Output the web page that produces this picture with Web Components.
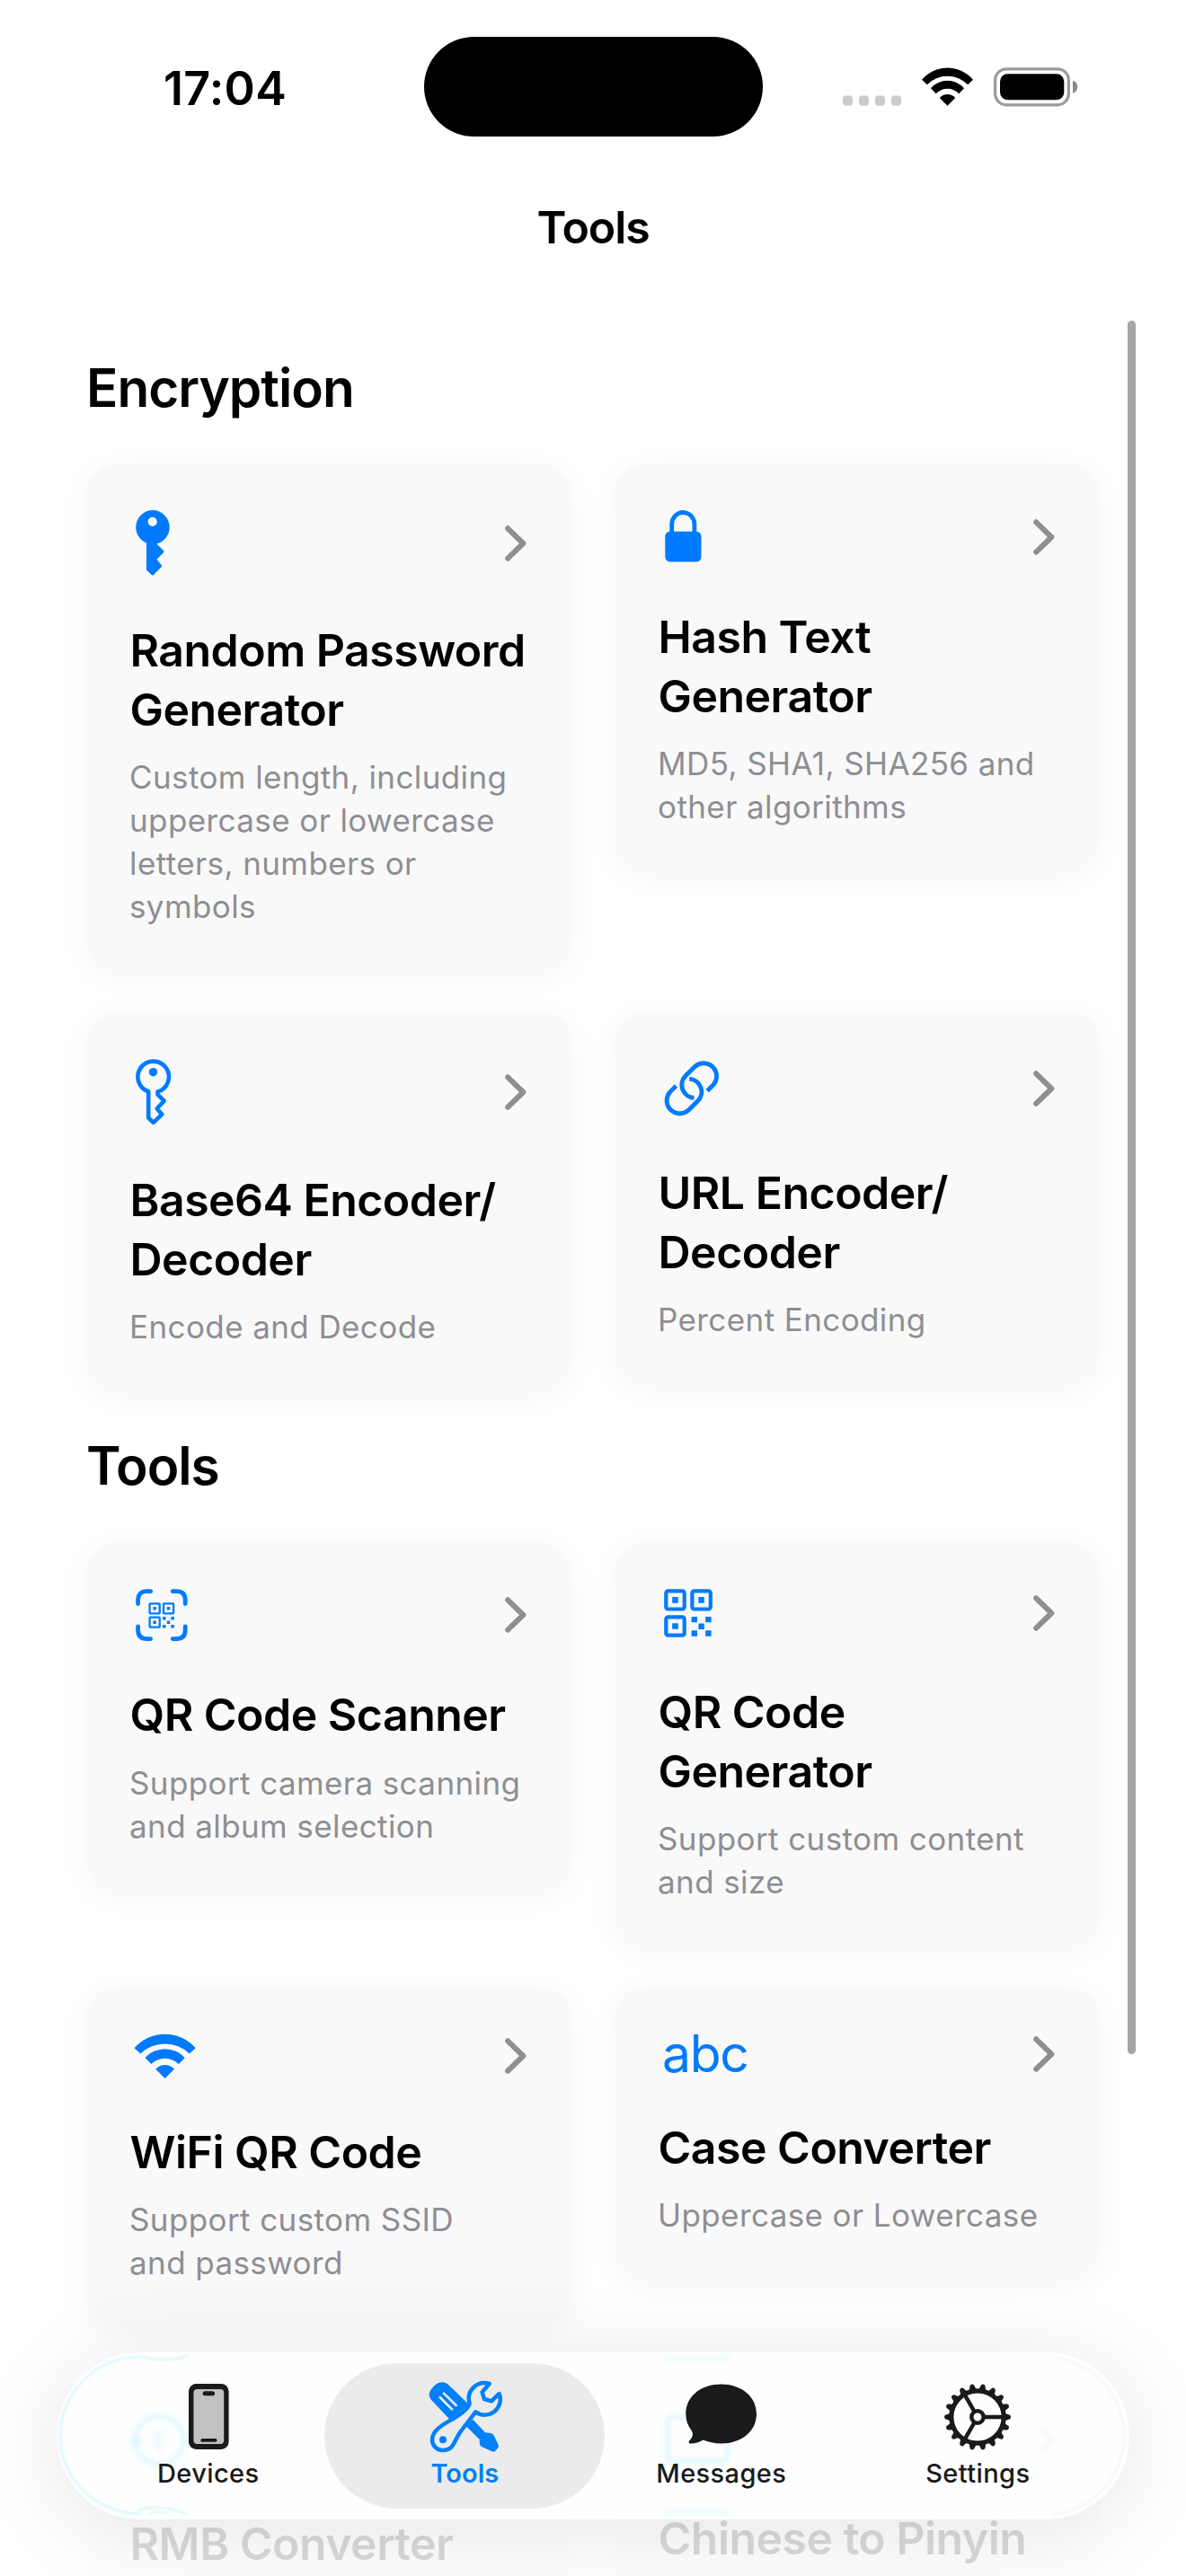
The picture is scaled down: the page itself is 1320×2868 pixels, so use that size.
<!DOCTYPE html>
<html lang="en">
<head>
<meta charset="utf-8">
<title>Tools</title>
<style>
  html, body { margin: 0; padding: 0; background: #fff; }
  body { font-family: Inter, "Liberation Sans", sans-serif; color: #000; }
</style>
</head>
<body>
<tools-app>
  <tool-section heading="Encryption">
    <tool-card icon="key-fill" style="--head:82px"><span slot="title">Random Password<br>Generator</span>Custom length, including<br>uppercase or lowercase<br>letters, numbers or<br>symbols</tool-card>
    <tool-card icon="lock" style="--head:67px"><span slot="title">Hash Text<br>Generator</span>MD5, SHA1, SHA256 and<br>other algorithms</tool-card>
    <tool-card icon="key" style="--head:84px"><span slot="title">Base64 Encoder/<br>Decoder</span>Encode and Decode</tool-card>
    <tool-card icon="link" style="--head:76px"><span slot="title">URL Encoder/<br>Decoder</span>Percent Encoding</tool-card>
  </tool-section>
  <tool-section heading="Tools">
    <tool-card icon="scanner" style="--head:67px"><span slot="title">QR Code Scanner</span>Support camera scanning<br>and album selection</tool-card>
    <tool-card icon="qr" style="--head:63.5px"><span slot="title">QR Code<br>Generator</span>Support custom content<br>and size</tool-card>
    <tool-card icon="wifi" style="--head:58px"><span slot="title">WiFi QR Code</span>Support custom SSID<br>and password</tool-card>
    <tool-card icon="abc" style="--head:53px"><span slot="title">Case Converter</span>Uppercase or Lowercase</tool-card>
    <tool-card icon="none" style="--head:70px"><span slot="title">RMB Converter</span></tool-card>
    <tool-card icon="none" style="--head:64px"><span slot="title">Chinese to Pinyin</span></tool-card>
  </tool-section>
</tools-app>

<script>
const WIFI = `<path d="M315 115A111.4 111.4 0 0 1 486 115L468.500 131A96 96 0 0 0 332.500 131Z"/>
  <path d="M345 143A74 74 0 0 1 456 143L439 161A54 54 0 0 0 362 161Z"/>
  <path d="M374.500 175.500A34 34 0 0 1 426.500 175.500L400.500 202Z"/>`;

const ICONS = {
  'none': '',
  'key-fill': `<svg width="60" height="82" viewBox="0 0 60 82"><path fill="currentColor" fill-rule="evenodd" d="M26 4.100A18.900 18.900 0 0 0 19 40.500V70.500L25 76.200Q26 77 27 76L35.800 67Q36.500 66 35.800 65.200L30.500 58.800L38 51.200Q39 50 38 49L30.500 41.600V41.300A18.900 18.900 0 0 0 26 4.100ZM25.700 11.700a5.100 5.100 0 1 1 0 10.200a5.100 5.100 0 1 1 0-10.200Z"/></svg>`,
  'lock': `<svg width="60" height="67" viewBox="0 0 60 67"><rect x="8.300" y="27.700" width="40.200" height="33.900" rx="5.500" fill="currentColor"/><path d="M15.700 30V20A12.600 13.500 0 0 1 40.900 20V30" fill="none" stroke="currentColor" stroke-width="4.800"/></svg>`,
  'key': `<svg width="60" height="84" viewBox="0 0 60 84"><path d="M21.200 41.300V70.500L26.700 75.800L36.300 66.700L30.700 60.200L38.700 51.600L31.500 44.600V41.500A17.300 17.300 0 1 0 21.200 41.300Z" fill="none" stroke="currentColor" stroke-width="4.600" stroke-linejoin="round"/><circle cx="26.500" cy="19.600" r="4.700" fill="currentColor"/></svg>`,
  'link': `<svg width="76" height="76" viewBox="0 0 76 76" fill="none" stroke="currentColor" stroke-width="4.900"><path d="M55.200 40.600L62.100 33.700A14.500 14.500 0 0 0 41.600 13.300L31 23.800A14.500 14.500 0 0 0 40.500 48.400"/><path transform="rotate(180 37.850 37.750)" d="M55.200 40.600L62.100 33.700A14.500 14.500 0 0 0 41.600 13.300L31 23.800A14.500 14.500 0 0 0 40.500 48.400"/></svg>`,
  'scanner': `<svg width="72" height="68" viewBox="0 0 72 68"><path fill="none" stroke="currentColor" stroke-width="4.800" stroke-linecap="round" d="M9.600 21.500V17.500Q9.600 7.700 19.500 7.700H23.600M48.200 7.700H52.300Q62.200 7.700 62.200 17.500V21.500M62.200 46.800V50.800Q62.200 60.600 52.300 60.600H48.200M23.600 60.600H19.500Q9.600 60.600 9.600 50.800V46.800"/>
    <g fill="none" stroke="currentColor" stroke-width="2.300"><rect x="22.600" y="21.300" width="11.100" height="11.100" rx=".6"/><rect x="38" y="21.300" width="11.100" height="11.100" rx=".6"/><rect x="22.600" y="36.600" width="11.100" height="11.100" rx=".6"/></g>
    <path fill="currentColor" d="M26.400 25.100h3.500v3.500h-3.500zM41.800 25.100h3.500v3.500h-3.500zM26.400 40.400h3.500v3.500h-3.500zM37 35.900h3.500v3.500h-3.500zM46.300 35.900h3.500v3.500h-3.500zM41.700 40.400h3.500v3.500h-3.500zM37 45h3.500v3.500h-3.500zM46.300 45h3.500v3.500h-3.500z"/></svg>`,
  'qr': `<svg width="68" height="64" viewBox="0 0 68 64"><g fill="none" stroke="currentColor" stroke-width="4.200"><rect x="9.300" y="7.300" width="20.400" height="20.200" rx="2.200"/><rect x="38.400" y="7.300" width="20.400" height="20.200" rx="2.200"/><rect x="9.300" y="36.400" width="20.400" height="20.200" rx="2.200"/></g><path fill="currentColor" d="M16.200 14.100h6.600v6.600h-6.600zM45.300 14.100h6.600v6.600h-6.600zM16.200 43.200h6.600v6.600h-6.600zM37.600 35.900h6.400v6.400h-6.400zM53.200 35.900h6.400v6.400h-6.400zM45.400 43.500h6.400v6.400h-6.400zM37.600 51.300h6.400v6.400h-6.400zM53.200 51.300h6.400v6.400h-6.400z"/></svg>`,
  'wifi': `<svg width="80" height="58" viewBox="0 0 80 58"><g fill="currentColor" transform="translate(-120 -24.500) scale(.3985 .3885)">${WIFI}</g></svg>`,
  'abc': `<span class="abc">abc</span>`
};

class StatusBar extends HTMLElement {
  constructor() {
    super();
    this.attachShadow({ mode: 'open' }).innerHTML = `
    <style>
      :host { display: grid; grid-template-columns: 472px 377px 471px; align-items: center; height: 111px; padding: 41px 0 28px; }
      .time { text-align: center; padding-left: 29px; font-size: 52px; font-weight: 600; letter-spacing: .3px; line-height: 60px; margin-top: 4px; }
      .island { height: 111px; border-radius: 56px; background: #000; }
      svg { display: block; margin-left: 88.500px; }
    </style>
    <div class="time">17:04</div>
    <div class="island"></div>
    <svg width="264" height="46" viewBox="0 0 264 46">
      <g fill="#cbcbcb"><rect y="32.500" width="11" height="11" rx="3.600"/><rect x="18" y="32.500" width="11" height="11" rx="3.600"/><rect x="36" y="32.500" width="11" height="11" rx="3.600"/><rect x="54" y="32.500" width="11" height="11" rx="3.600"/></g>
      <g transform="translate(-17 -23.500) scale(.33333)">${WIFI}</g>
      <rect x="169.600" y="2.800" width="81.800" height="40" rx="12.500" fill="none" stroke="#9b9b9b" stroke-width="3.200"/>
      <rect x="175" y="8.300" width="71.300" height="29" rx="8.500"/>
      <path d="M256 15.800Q261.200 17.500 261.200 22.800T256 29.800Z" fill="#8a8a8a"/>
    </svg>`;
  }
}

class ToolSection extends HTMLElement {
  constructor() {
    super();
    this.attachShadow({ mode: 'open' }).innerHTML = `
    <style>
      :host { display: block; }
      h2 { margin: 0 0 48.500px; font-size: 58.500px; line-height: 72px; font-weight: 600; letter-spacing: -1px; }
      .grid { display: grid; grid-template-columns: 540px 540px; gap: 48px; align-items: start; }
    </style>
    <h2></h2><div class="grid"><slot></slot></div>`;
    this.shadowRoot.querySelector('h2').textContent = this.getAttribute('heading');
  }
}

class ToolCard extends HTMLElement {
  constructor() {
    super();
    this.attachShadow({ mode: 'open' }).innerHTML = `
    <style>
      :host { display: block; box-sizing: border-box; padding: 48px 48px 45.200px; border-radius: 36px; background: #f9f9f9; box-shadow: 0 8px 38px rgba(0,0,0,.043); white-space: nowrap; }
      .head { display: flex; align-items: center; justify-content: space-between; height: var(--head); margin-bottom: 44.600px; color: #007aff; }
      .head svg { display: block; flex: none; }
      .abc { font-size: 57px; line-height: 53px; letter-spacing: -1.300px; padding-left: 5px; font-weight: 400; }
      .title { font-size: 50px; line-height: 66px; font-weight: 600; letter-spacing: -.520px; padding-left: .5px; }
      .desc { margin-top: 18.300px; font-size: 35px; line-height: 48px; min-height: 48px; letter-spacing: .4px; color: #8e8e93; }
    </style>
    <div class="head"><span>${ICONS[this.getAttribute('icon')]}</span>
      <svg width="26" height="40" viewBox="0 0 26 40"><path d="M3.200 3.300L20.300 20L3.200 36.700" fill="none" stroke="#8e8e93" stroke-width="6" stroke-linecap="round" stroke-linejoin="round"/></svg></div>
    <div class="title"><slot name="title"></slot></div>
    <div class="desc"><slot></slot></div>`;
  }
}

const GEAR = (() => {
  let teeth = '';
  for (let i = 0; i < 18; i++) teeth += `<path transform="rotate(${i * 20})" d="M30 -4.200L36 -2.200Q38 0 36 2.200L30 4.200Z"/>`;
  let spokes = '';
  for (const a of [0, 120, 240]) spokes += `<path transform="rotate(${a})" d="M7 -2.200H29V2.200H7Z"/>`;
  return `<svg width="76" height="76" viewBox="-38 -38 76 76"><g fill="#181a1b">${teeth}${spokes}</g><circle r="29.200" fill="none" stroke="#181a1b" stroke-width="5.200"/><circle r="6.700" fill="none" stroke="#181a1b" stroke-width="4.400"/></svg>`;
})();

const TAB_ICONS = {
  devices: `<svg width="46" height="74" viewBox="0 0 46 74"><rect x="1" width="44.600" height="73" rx="8.500" fill="#181a1b"/><rect x="6.500" y="6" width="33.700" height="61" rx="4" fill="#c1c1c1"/><rect x="16.600" y="8.300" width="13.400" height="5" rx="2.500" fill="#181a1b"/><rect x="14.400" y="61" width="18" height="3.800" rx="1.600" fill="#181a1b"/></svg>`,
  tools: `<svg width="83.300" height="83.300" viewBox="165 90 250 250"><g fill="#0080fa"><path d="M178 160Q165 146 173 130Q184 108 203 101Q222 97 236 110L302 173L240 226Z"/><path d="M316 224L357 268L376 270Q382 271 385 276L401 308Q404 314 399 320L391 329Q386 334 380 331L345 315Q339 312 339 306L338 291L293 246Z"/></g>
    <path d="M206 150L246 190M219 137L260 177" stroke="#ebebeb" stroke-width="8" stroke-linecap="round"/>
    <path d="M371 105A52 52 0 0 0 305 170C303 186 268 212 236 230C196 252 180 270 180 294A35 35 0 0 0 217 327C258 325 250 292 283 254C300 232 312 218 325 199A52 52 0 0 0 404 138L378 163L354 156L347 133Z" fill="#ebebeb" stroke="#0080fa" stroke-width="13.500" stroke-linejoin="round"/>
    <circle cx="216" cy="292" r="12" fill="#0080fa"/></svg>`,
  messages: `<svg width="80" height="74" viewBox="0 0 80 74"><path fill="#181a1b" d="M39.500 .5C62 .5 79 14 79 33.500S62 66.500 39.500 66.500C32 66.500 25 65 19.500 62.600C15 65.500 10 66.800 6 66.600C3.300 66.400 3 64.500 4.600 63C7.800 60 9 56 6.800 52.300C2.500 47 .3 40.500 .3 33.500C.3 14 17 .5 39.500 .5Z"/></svg>`,
  settings: GEAR
};

class TabItem extends HTMLElement {
  constructor() {
    super();
    this.attachShadow({ mode: 'open' }).innerHTML = `
    <style>
      :host { display: flex; flex-direction: column; align-items: center; box-sizing: border-box; width: 312px; height: 161.500px; padding-top: 23px; border-radius: 81px; color: #181a1b; flex: none; }
      :host(:not(:first-of-type)) { margin-left: -26.500px; }
      :host([active]) { background: #ebebeb; color: #007ff5; }
      .i { height: 74px; display: flex; align-items: center; justify-content: center; }
      .i svg { display: block; flex: none; }
      span { margin-top: 8px; font-size: 29px; line-height: 36px; font-weight: 500; letter-spacing: .4px; }
      :host([active]) span { font-weight: 600; letter-spacing: 0; }
    </style>
    <div class="i">${TAB_ICONS[this.getAttribute('icon')]}</div><span><slot></slot></span>`;
  }
}

class TabBar extends HTMLElement {
  constructor() {
    super();
    this.attachShadow({ mode: 'open' }).innerHTML = `
    <style>
      :host { display: block; position: absolute; left: 63px; top: 2619px; width: 1194px; height: 186px; border-radius: 93px; background: #fefefe; box-shadow: 0 12px 100px rgba(0,0,0,.1); overflow: hidden; }
      .glow { position: absolute; left: 0; top: 0; }
      nav { position: relative; display: flex; padding: 12px 12px 12px 12.800px; }
    </style>
    <svg class="glow" width="1194" height="186" viewBox="0 0 1194 186" fill="none">
      <defs><filter id="b" x="-20%" y="-20%" width="140%" height="140%"><feGaussianBlur stdDeviation="2.800"/></filter><filter id="s" x="-20%" y="-20%" width="140%" height="140%"><feGaussianBlur stdDeviation="1"/></filter></defs>
      <g filter="url(#b)" stroke="#dff8fe" stroke-width="5">
        <circle cx="114" cy="98" r="27"/><path d="M107 85L114 97L121 85M114 97V112M108 102H120" stroke-width="2.500"/><path d="M83 96L88 103L93 96" stroke-width="7"/>
        <rect x="680" y="72" width="66" height="49" rx="3"/><path d="M705 106L713 86L721 106" stroke-width="3"/>
        <path d="M680 3V7H746V3M680 182V177H746V182" stroke-width="3"/>
      </g>
      <g filter="url(#s)" stroke="#d9f7fd" stroke-width="2.500">
        <path d="M145 4Q120 12 94 5C44 4 4 46 4 93S44 180 94 180M90 176Q115 168 145 180M104 180Q114 175 124 180"/>
      </g>
      <g filter="url(#b)" stroke="#f5f5fb" stroke-width="5"><path d="M1095 82L1107 98L1095 112"/></g>
      <path filter="url(#s)" d="M1110 6C1150 10 1188 45 1188 93S1150 176 1110 180" stroke="#f5f5fb" stroke-width="2"/>
    </svg>
    <nav><slot></slot></nav>`;
  }
}

class ToolsApp extends HTMLElement {
  constructor() {
    super();
    this.attachShadow({ mode: 'open' }).innerHTML = `
    <style>
      :host { display: block; position: relative; width: 1320px; height: 2868px; overflow: hidden; background: #fff; }
      h1 { margin: 0; padding: 40px 0 0; height: 175.500px; text-align: center; font-size: 50px; line-height: 66px; font-weight: 600; letter-spacing: -1.100px; }
      main { display: flex; flex-direction: column; gap: 50px; padding: 0 96px; }
      .scroll { position: absolute; left: 1254.500px; top: 357px; width: 9px; height: 1930px; border-radius: 5px; background: #a5a5a5; }
      .fade { position: absolute; left: 0; right: 0; top: 2619px; height: 249px; background: rgba(255,255,255,.85); }
    </style>
    <status-bar></status-bar>
    <h1>Tools</h1>
    <main><slot></slot></main>
    <div class="scroll"></div>
    <div class="fade"></div>
    <tab-bar>
      <tab-item icon="devices">Devices</tab-item>
      <tab-item icon="tools" active>Tools</tab-item>
      <tab-item icon="messages">Messages</tab-item>
      <tab-item icon="settings">Settings</tab-item>
    </tab-bar>`;
  }
}

customElements.define('status-bar', StatusBar);
customElements.define('tool-card', ToolCard);
customElements.define('tool-section', ToolSection);
customElements.define('tab-item', TabItem);
customElements.define('tab-bar', TabBar);
customElements.define('tools-app', ToolsApp);
</script>
</body>
</html>
